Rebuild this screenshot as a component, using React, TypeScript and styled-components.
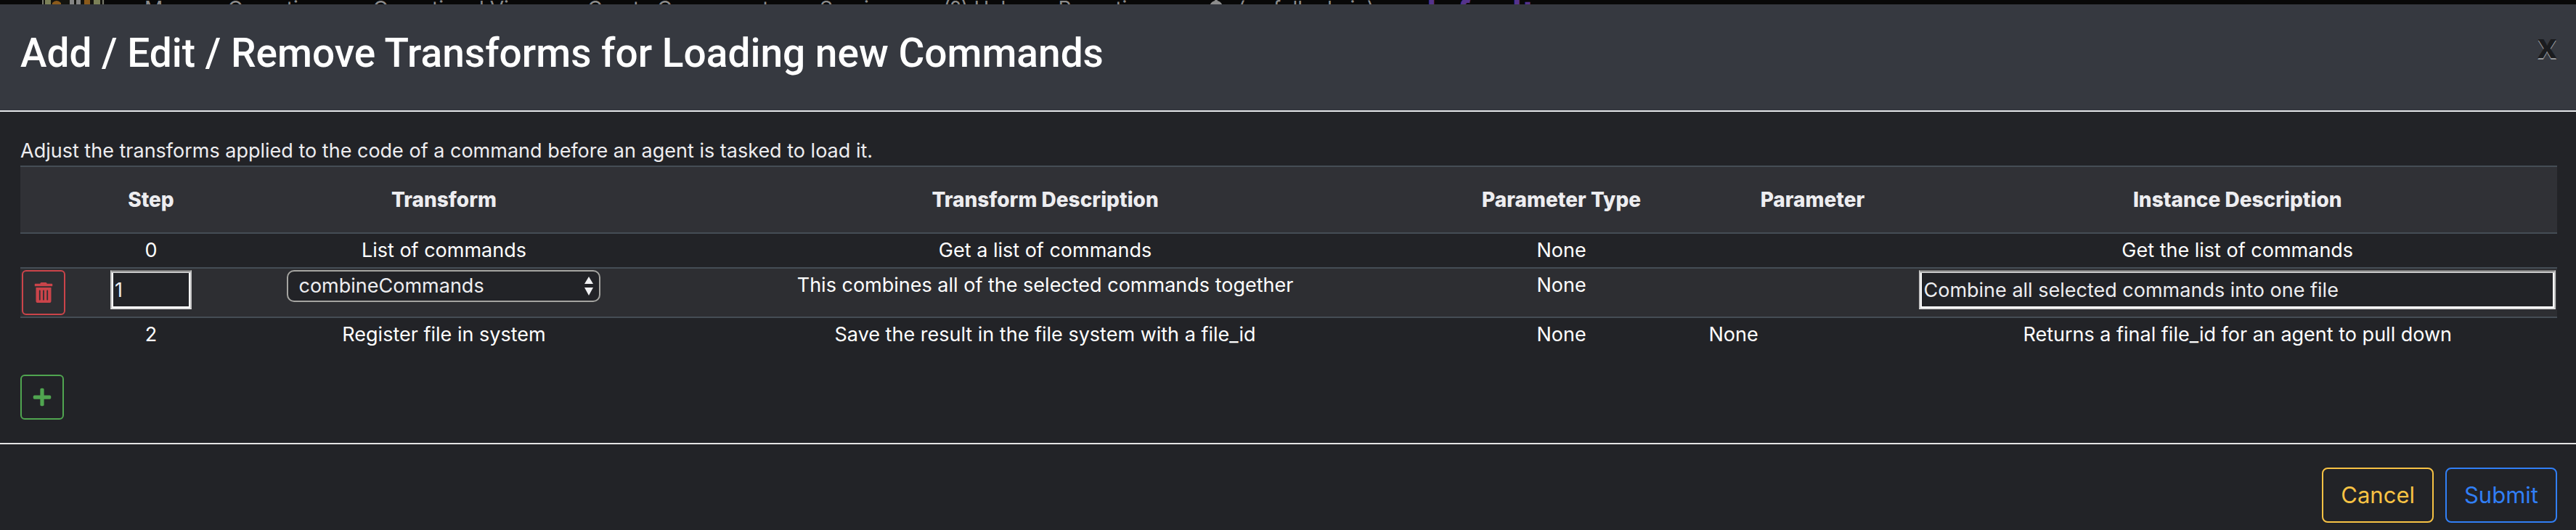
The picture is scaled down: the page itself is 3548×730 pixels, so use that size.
import React, { useState } from 'react';
import styled, { createGlobalStyle } from 'styled-components';
import { FaTrashAlt, FaPlus, FaBell } from 'react-icons/fa';

const GlobalStyle = createGlobalStyle`
  *, *::before, *::after { box-sizing: border-box; }
  body {
    margin: 0;
    background: #222327;
    color: #fff;
    font-family: Inter, "Liberation Sans", sans-serif;
    font-size: 27px;
    line-height: 42px;
  }
`;

const Navbar = styled.nav`
  display: flex;
  align-items: flex-end;
  height: 6px;
  overflow: hidden;
  background: #080808;
  color: #8c8c8c;
  font-size: 28px;
  line-height: 28px;
  white-space: nowrap;
`;

const NavTrack = styled.div`
  display: flex;
  align-items: center;
  gap: 55px;
  height: 20px;
  margin-bottom: -16px;
  padding-left: 58px;
`;

const NavLogo = styled.svg`
  display: block;
  width: 86px;
  height: 40px;
`;

const NavLink = styled.a`
  color: inherit;
  text-decoration: none;
`;

const ThemeLink = styled(NavLink)`
  padding-top: 12px;
  color: #55338c;
  font-size: 48px;
  font-weight: 700;
`;

const NavUser = styled.span`
  display: flex;
  align-items: center;
  gap: 16px;
  padding-left: 20px;
`;

const Header = styled.header`
  display: flex;
  align-items: flex-start;
  justify-content: space-between;
  padding: 32px 26px 44px 28px;
  border-bottom: 2px solid #e4e6e8;
  background: #363940;
`;

const Title = styled.h1`
  margin: 0;
  font-family: Roboto, sans-serif;
  font-size: 55px;
  font-weight: 500;
  line-height: 70px;
`;

const CloseButton = styled.button`
  padding: 0;
  border: 0;
  background: none;
  color: #1b1c1f;
  font: 700 48px/50px Inter, sans-serif;
  text-shadow: 0 2px 0 #96989c;
`;

const Body = styled.main`
  padding: 34px 26px 32px 28px;
`;

const Intro = styled.p`
  margin: 0;
  color: #ededf0;
  line-height: 40px;
`;

const Table = styled.table`
  width: 100%;
  table-layout: fixed;
  border-collapse: separate;
  border-spacing: 0;
  text-align: center;
`;

const Col = styled.col<{ $share: number }>`
  width: ${(p) => p.$share}%;
`;

const HeadCell = styled.th`
  height: 94px;
  padding: 0;
  border-top: 2px solid #454d55;
  border-bottom: 2px solid #454d55;
  background: #303136;
  color: #ededf0;
  font-size: 28px;
  font-weight: 800;
`;

const Cell = styled.td<{ $align?: string }>`
  padding: 2px;
  text-align: ${(p) => p.$align || 'center'};
  vertical-align: top;
`;

const Row = styled.tr<{ $active?: boolean }>`
  background: ${(p) => (p.$active ? '#2d2e32' : 'transparent')};

  tr + & > td {
    border-top: 2px solid #454d55;
  }
`;

const IconButton = styled.button<{ $tone: string }>`
  display: flex;
  align-items: center;
  justify-content: center;
  width: 60px;
  height: 62px;
  padding: 0;
  border: 2px solid ${(p) => p.$tone};
  border-radius: 6px;
  background: transparent;
  color: ${(p) => p.$tone};
  font-size: 28px;
`;

const TextInput = styled.input<{ $width: string }>`
  display: block;
  width: ${(p) => p.$width};
  height: 54px;
  margin: 0 auto;
  padding: 2px 4px;
  border: 2px solid;
  border-color: #7c7c7c #c4c4c4 #dedede;
  background: #222327;
  box-shadow: inset 0 2px 0 #c8c8c8, inset 0 0 0 2px #fff;
  color: #ededf0;
  font: inherit;
`;

const SelectBox = styled.div`
  position: relative;
  width: 432px;
  margin: 0 auto;
`;

const Select = styled.select`
  display: block;
  width: 100%;
  height: 44px;
  padding: 0 14px;
  appearance: none;
  border: 2px solid #a5a5a1;
  border-radius: 10px;
  background: #222327;
  color: #ededf0;
  font: inherit;
  line-height: 40px;
`;

const SelectArrows = styled.svg`
  position: absolute;
  top: 9px;
  right: 9px;
  width: 14px;
  height: 26px;
  pointer-events: none;
`;

const AddArea = styled.div`
  padding-top: 32px;
`;

const Footer = styled.footer`
  display: flex;
  justify-content: flex-end;
  gap: 16px;
  padding: 32px 26px 10px;
  border-top: 2px solid #e4e4e4;
`;

const ActionButton = styled.button<{ $tone: string }>`
  height: 76px;
  padding: 0 24px;
  border: 2px solid ${(p) => p.$tone};
  border-radius: 8px;
  background: transparent;
  color: ${(p) => p.$tone};
  font: 400 31px/48px Inter, sans-serif;
`;

const columns = [
  { label: '', share: 2.7 },
  { label: 'Step', share: 4.9 },
  { label: 'Transform', share: 18.2 },
  { label: 'Transform Description', share: 29.2 },
  { label: 'Parameter Type', share: 11.5 },
  { label: 'Parameter', share: 8.3 },
  { label: 'Instance Description', share: 25.2 },
];

const navItems = ['Manage Operations', 'Operational Views', 'Create Components', 'Services', '(?) Help', 'Reporting'];

export default function App() {
  const [step, setStep] = useState('1');
  const [note, setNote] = useState('Combine all selected commands into one file');

  return (
    <>
      <GlobalStyle />
      <Navbar>
        <NavTrack>
          <NavLogo viewBox="0 0 86 40" aria-hidden="true">
            <rect width="86" height="40" fill="#14140f" />
            <path d="M0 0h2v40H0zM83 0h2v40h-2z" fill="#77796c" />
            <path d="M4 0h8v40H4zM71 0h9v40h-9z" fill="#7b8058" />
            <path d="M14 40V12q6-6 12 0v28zM58 40V0h8v40z" fill="#8a5a1c" />
            <path d="M38 0h6v40h-6zM47 0h6v40h-6z" fill="#858585" />
          </NavLogo>
          {navItems.map((item) => (
            <NavLink href="#" key={item}>{item}</NavLink>
          ))}
          <NavUser>
            <FaBell />
            <NavLink href="#">(as full admin)</NavLink>
          </NavUser>
          <ThemeLink href="#">default</ThemeLink>
        </NavTrack>
      </Navbar>
      <Header>
        <Title>Add / Edit / Remove Transforms for Loading new Commands</Title>
        <CloseButton type="button" aria-label="Close">x</CloseButton>
      </Header>
      <Body>
        <Intro>Adjust the transforms applied to the code of a command before an agent is tasked to load it.</Intro>
        <Table>
          <colgroup>
            {columns.map((c, i) => <Col key={i} $share={c.share} />)}
          </colgroup>
          <thead>
            <tr>{columns.map((c, i) => <HeadCell key={i} scope="col">{c.label}</HeadCell>)}</tr>
          </thead>
          <tbody>
            <Row>
              <Cell />
              <Cell>0</Cell>
              <Cell>List of commands</Cell>
              <Cell>Get a list of commands</Cell>
              <Cell>None</Cell>
              <Cell />
              <Cell>Get the list of commands</Cell>
            </Row>
            <Row $active>
              <Cell>
                <IconButton type="button" $tone="#cb444a" aria-label="Remove step"><FaTrashAlt /></IconButton>
              </Cell>
              <Cell>
                <TextInput $width="112px" aria-label="Step" value={step} onChange={(e) => setStep(e.target.value)} />
              </Cell>
              <Cell>
                <SelectBox>
                  <Select aria-label="Transform"><option>combineCommands</option></Select>
                  <SelectArrows viewBox="0 0 14 26" aria-hidden="true">
                    <path d="M7 0l6 10H1zM7 26l6-11H1z" fill="#f0f0f2" />
                  </SelectArrows>
                </SelectBox>
              </Cell>
              <Cell>This combines all of the selected commands together</Cell>
              <Cell>None</Cell>
              <Cell />
              <Cell>
                <TextInput $width="100%" aria-label="Instance description" value={note} onChange={(e) => setNote(e.target.value)} />
              </Cell>
            </Row>
            <Row>
              <Cell />
              <Cell>2</Cell>
              <Cell>Register file in system</Cell>
              <Cell>Save the result in the file system with a file_id</Cell>
              <Cell>None</Cell>
              <Cell $align="left">None</Cell>
              <Cell>Returns a final file_id for an agent to pull down</Cell>
            </Row>
          </tbody>
        </Table>
        <AddArea>
          <IconButton type="button" $tone="#50a550" aria-label="Add step"><FaPlus /></IconButton>
        </AddArea>
      </Body>
      <Footer>
        <ActionButton type="button" $tone="#f7c244">Cancel</ActionButton>
        <ActionButton type="button" $tone="#317ff6">Submit</ActionButton>
      </Footer>
    </>
  );
}
